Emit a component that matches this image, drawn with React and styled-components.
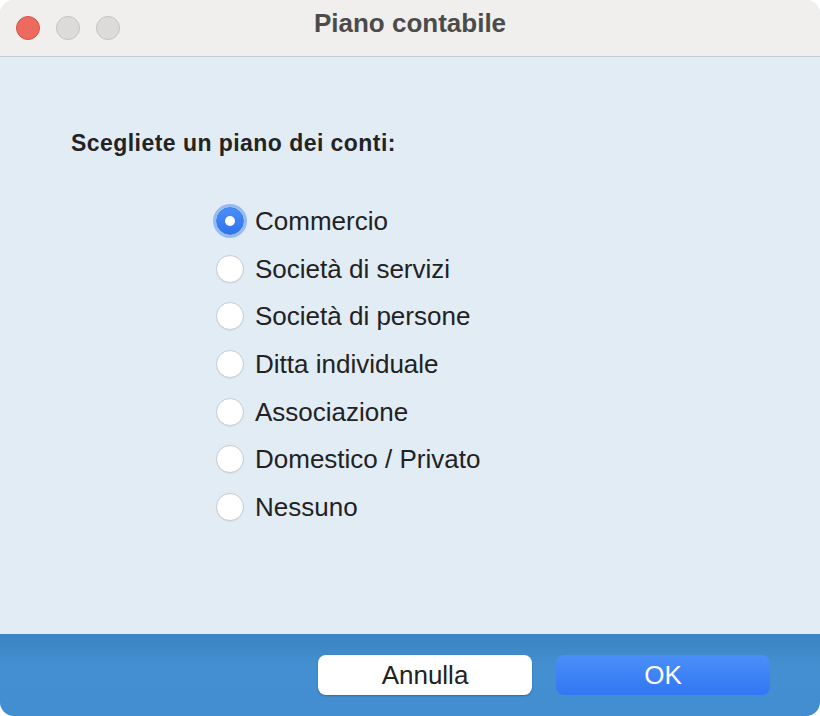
import React, { useState } from "react";
import styled, { createGlobalStyle } from "styled-components";

const Global = createGlobalStyle`
  html, body { margin: 0; padding: 0; background: #ffffff; }
  body { font-family: "Liberation Sans", Arial, sans-serif; }
  * { box-sizing: border-box; }
`;

const Window = styled.div`
  width: 820px;
  height: 716px;
  border-radius: 14px;
  overflow: hidden;
  display: flex;
  flex-direction: column;
  background: #e2ecf5;
`;

const TitleBar = styled.div`
  height: 57px;
  flex: none;
  background: #f0efee;
  border-bottom: 1px solid #c3ccd5;
  display: grid;
  grid-template-columns: 1fr auto 1fr;
  align-items: center;
  padding: 0 16px;
`;

const Lights = styled.div`
  display: flex;
  gap: 16px;
`;

const Light = styled.span`
  width: 24px;
  height: 24px;
  border-radius: 50%;
  background: ${(p) => (p.$red ? "#ed6a5e" : "#dcdbda")};
  border: 1px solid ${(p) => (p.$red ? "#d2544a" : "#c4c3c2")};
`;

const Title = styled.div`
  align-self: start;
  margin-top: 8px;
  line-height: 30px;
  font-weight: bold;
  font-size: 26px;
  color: #4b4b4b;
`;

const Content = styled.div`
  flex: 1;
  padding: 72px 0 0 71px;
  display: flex;
  flex-direction: column;
`;

const Prompt = styled.div`
  font-weight: bold;
  font-size: 23px;
  line-height: 28px;
  color: #232323;
  letter-spacing: 0.45px;
`;

const RadioList = styled.div`
  margin: 50px 0 0 145px;
  display: flex;
  flex-direction: column;
  gap: 19.7px;
`;

const RadioRow = styled.label`
  display: flex;
  align-items: center;
  gap: 11px;
  height: 28px;
  cursor: default;
`;

const Circle = styled.span`
  width: 28px;
  height: 28px;
  border-radius: 50%;
  flex: none;
  display: flex;
  align-items: center;
  justify-content: center;
  background: ${(p) =>
    p.$on ? "linear-gradient(#4a8ff7, #2f73ec)" : "#ffffff"};
  border: 1px solid ${(p) => (p.$on ? "#3a7ce8" : "#c9cdd1")};
  box-shadow: ${(p) =>
    p.$on ? "0 0 0 3px rgba(74, 138, 240, 0.5)" : "0 0.5px 1px rgba(0,0,0,0.08)"};
  &::after {
    content: "";
    display: ${(p) => (p.$on ? "block" : "none")};
    width: 10px;
    height: 10px;
    border-radius: 50%;
    background: #ffffff;
  }
`;

const RadioText = styled.span`
  font-size: 26px;
  line-height: 28px;
  color: #222222;
`;

const Footer = styled.div`
  height: 82px;
  flex: none;
  background: linear-gradient(#3b84c2, #438fd0 40%, #428ed0);
  display: flex;
  justify-content: flex-end;
  align-items: center;
  gap: 24px;
  padding: 0 50px 0 0;
`;

const Button = styled.button`
  width: 214px;
  height: 40px;
  border-radius: 8px;
  border: none;
  font-family: "Liberation Sans", Arial, sans-serif;
  font-size: 26px;
  color: ${(p) => (p.$primary ? "#ffffff" : "#222222")};
  background: ${(p) =>
    p.$primary ? "linear-gradient(#4a8ff8, #3276f4)" : "#ffffff"};
  box-shadow: ${(p) =>
    p.$primary ? "none" : "0 1px 2px rgba(0,0,0,0.25)"};
  padding: 0;
`;

const options = [
  "Commercio",
  "Società di servizi",
  "Società di persone",
  "Ditta individuale",
  "Associazione",
  "Domestico / Privato",
  "Nessuno",
];

export default function App() {
  const [sel, setSel] = useState(0);
  return (
    <>
      <Global />
      <Window>
        <TitleBar>
          <Lights>
            <Light $red />
            <Light />
            <Light />
          </Lights>
          <Title>Piano contabile</Title>
          <div />
        </TitleBar>
        <Content>
          <Prompt>Scegliete un piano dei conti:</Prompt>
          <RadioList>
            {options.map((o, i) => (
              <RadioRow key={o} onClick={() => setSel(i)}>
                <Circle $on={sel === i} />
                <RadioText>{o}</RadioText>
              </RadioRow>
            ))}
          </RadioList>
        </Content>
        <Footer>
          <Button>Annulla</Button>
          <Button $primary>OK</Button>
        </Footer>
      </Window>
    </>
  );
}
